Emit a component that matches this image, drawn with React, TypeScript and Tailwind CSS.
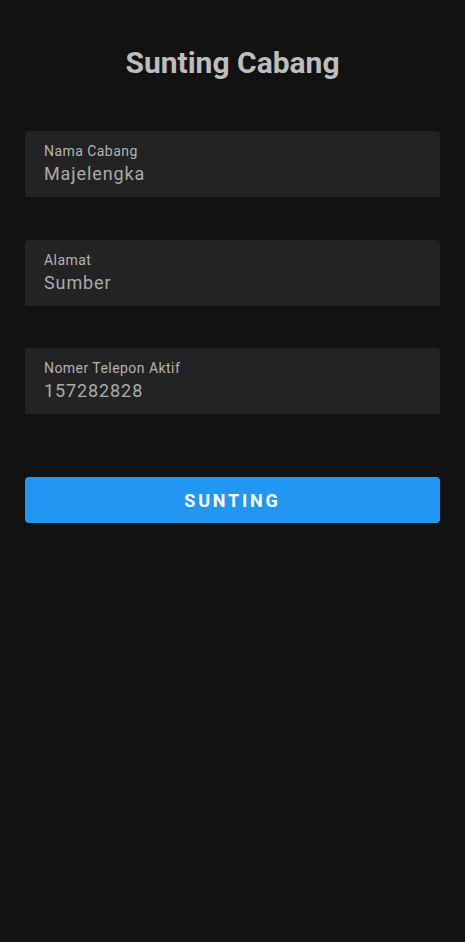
const fields = [
  { label: 'Nama Cabang', value: 'Majelengka' },
  { label: 'Alamat', value: 'Sumber' },
  { label: 'Nomer Telepon Aktif', value: '157282828' },
];

export default function App() {
  return (
    <div className="min-h-[942px] w-full bg-[#121212] px-[25px] pt-[43px] font-['Roboto',sans-serif]">
      {/* Header */}
      <h1 className="text-center text-[30px] leading-[40px] font-bold text-[#bdbdbd]">
        Sunting Cabang
      </h1>

      {/* Form fields */}
      <div className="mt-[48px] flex flex-col gap-[42.5px]">
        {fields.map((f) => (
          <div
            key={f.label}
            className="h-[66px] rounded-t-[4px] bg-[#232323] px-[19px] pt-[11px]"
          >
            <p className="text-[14px] leading-[18px] tracking-[0.45px] text-[#b3b3b3]">{f.label}</p>
            <p className="mt-[2px] text-[18px] leading-[24px] tracking-[0.9px] text-[#aaaaaa]">
              {f.value}
            </p>
          </div>
        ))}
      </div>

      {/* Submit */}
      <button className="mt-[63px] h-[46px] w-full rounded-[4px] bg-[#2196f3] text-[18px] font-bold tracking-[2.8px] text-white">
        SUNTING
      </button>
    </div>
  );
}
